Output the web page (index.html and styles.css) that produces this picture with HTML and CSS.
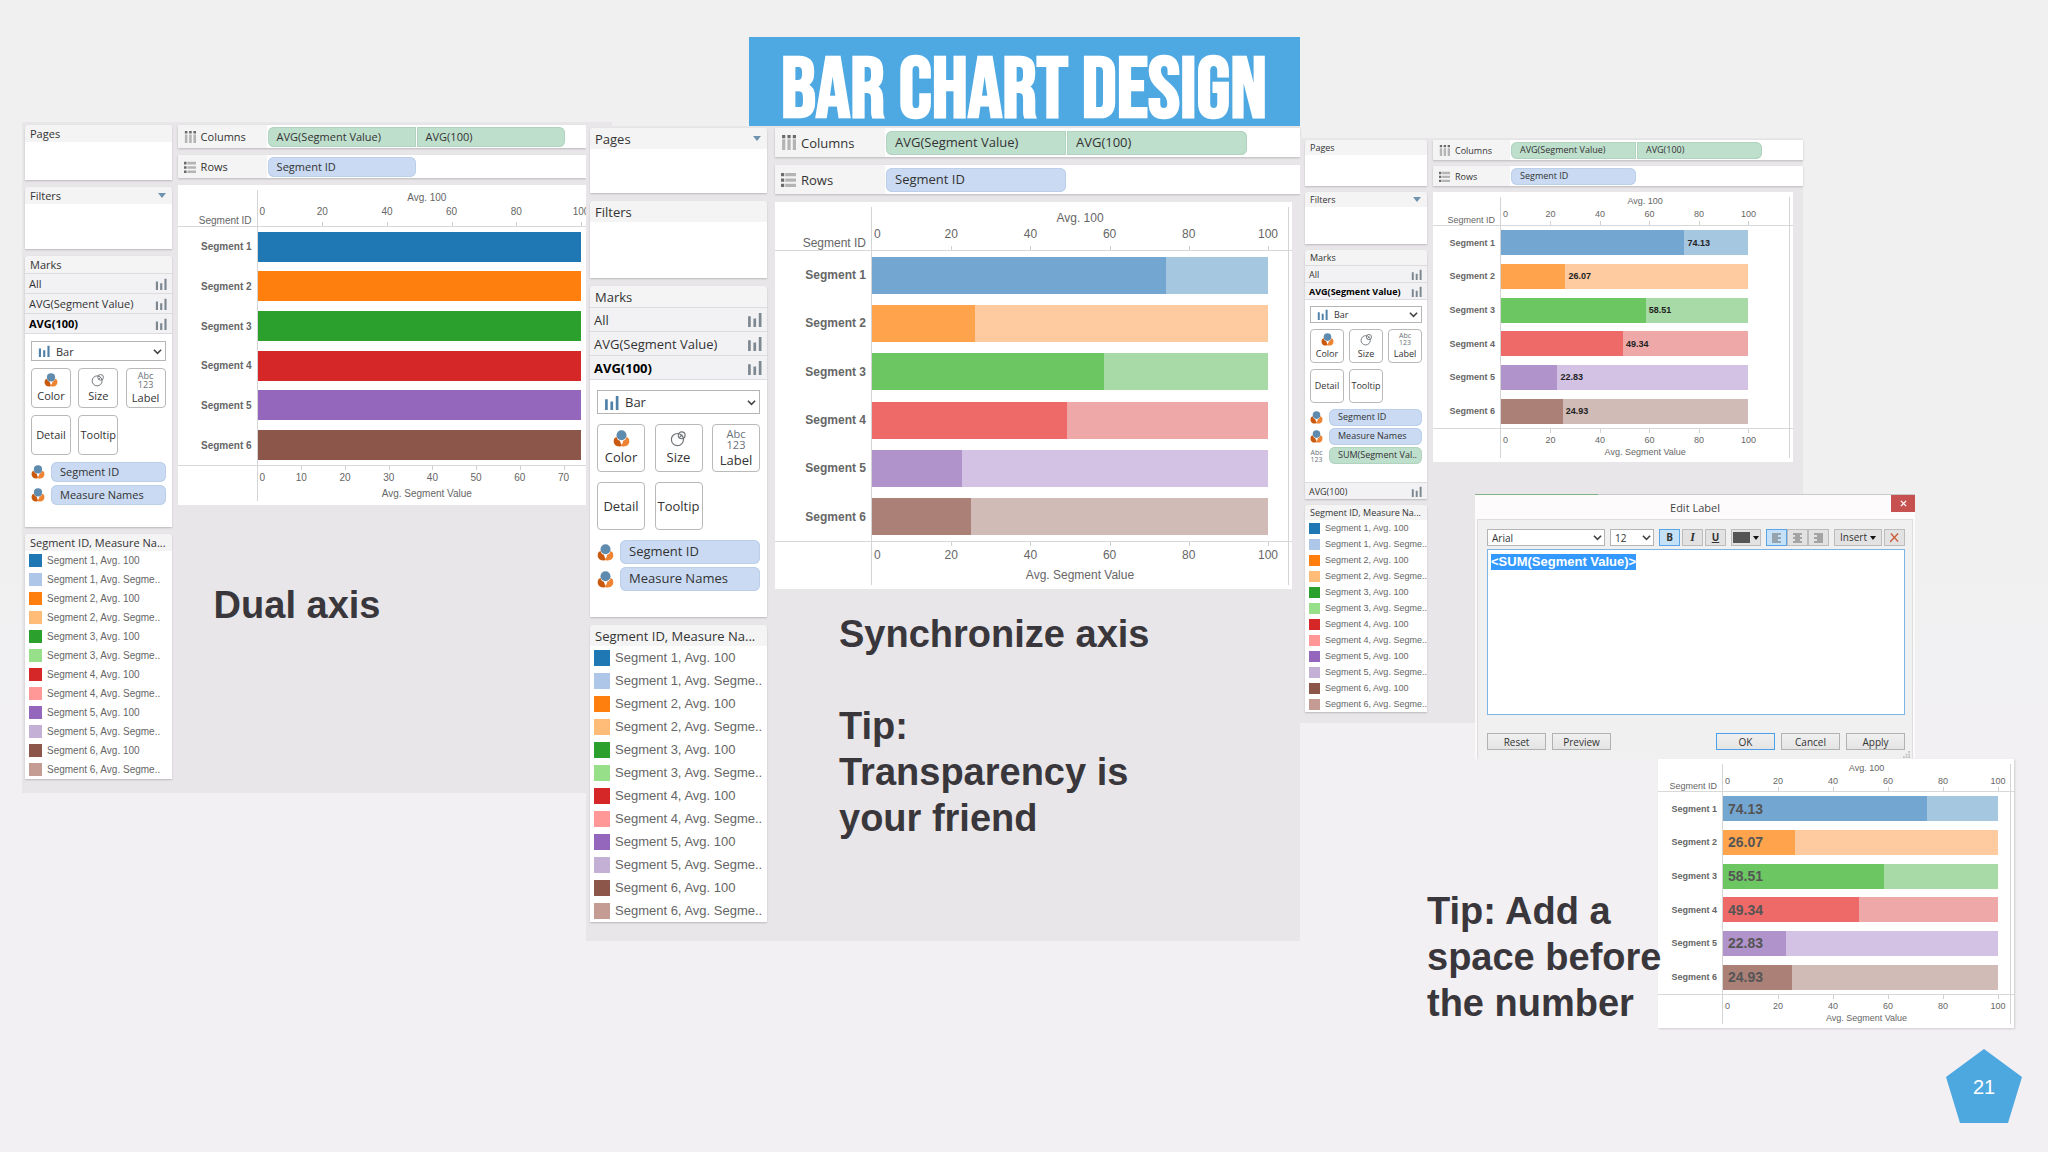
FILE: index.html
```html
<!DOCTYPE html>
<html lang="en">
<head>
    <meta charset="UTF-8">
    <meta name="viewport" content="width=device-width, initial-scale=1.0">
    <title>Bar Chart Design</title>
    <link rel="stylesheet" href="styles.css">
</head>
<body>
    <!-- Shared icons -->
    <svg class="sprite" aria-hidden="true">
        <symbol id="i-bars" viewBox="0 0 14 14">
            <path d="M1 4h2.500v10H1zM6 6h2.500v8H6zM11 1h2.500v13H11z"/>
        </symbol>
        <symbol id="i-color" viewBox="0 0 16 16">
            <path d="M1.500 7.500C-.5 11 1 15.500 6 15.500c1 0 1.800-.5 2-1L6.500 10C4.500 9.500 3.500 8 3.500 6.500z" fill="#c8590e"/>
            <path d="M14.500 7.500c2 3.500.5 8-4.500 8-1.500 0-2.500-.5-3-1.500C8.500 13.500 9.500 12 9.500 10c2-.5 3-2 3-3.500z" fill="#ee8433"/>
            <circle cx="8" cy="5" r="4.700" fill="#5f8bae"/>
        </symbol>
        <symbol id="i-size" viewBox="0 0 16 16">
            <g fill="none" stroke="#6e7378" stroke-width="1.100">
                <circle cx="7" cy="9" r="5.700"/>
                <circle cx="11" cy="5" r="3.200"/>
                <path d="M9 7l2.500-2.500"/>
            </g>
        </symbol>
        <symbol id="i-columns" viewBox="0 0 14 14">
            <path d="M1 0h3v3H1zM6 0h3v3H6zM11 0h3v3h-3z" fill="#6b6b6b"/>
            <path d="M1 4h3v10H1zM6 4h3v10H6zM11 4h3v10h-3z" fill="#b4b4b4"/>
        </symbol>
        <symbol id="i-rows" viewBox="0 0 14 14">
            <path d="M0 1h3v3H0zM0 6h3v3H0zM0 11h3v3H0z" fill="#6b6b6b"/>
            <path d="M4 1h10v3H4zM4 6h10v3H4zM4 11h10v3H4z" fill="#b4b4b4"/>
        </symbol>
        <symbol id="i-chevron" viewBox="0 0 10 10">
            <path d="M1 3l4 4 4-4" fill="none" stroke="#444" stroke-width="1.800"/>
        </symbol>
    </svg>

    <main class="slide">
        <header class="slide-header">
            <h1>BAR CHART DESIGN</h1>
        </header>

        <div class="columns">
            <!-- Step 1: dual axis -->
            <section class="shot shot-dual">
                <aside class="sidebar">
                    <div class="panel pages"><div class="panel-head">Pages</div></div>
                    <div class="panel filters"><div class="panel-head">Filters<i class="caret"></i></div></div>
                    <div class="panel marks">
                        <div class="panel-head">Marks</div>
                        <div class="mark-row">All<svg><use href="#i-bars"/></svg></div>
                        <div class="mark-row">AVG(Segment Value)<svg><use href="#i-bars"/></svg></div>
                        <div class="mark-row active">AVG(100)<svg><use href="#i-bars"/></svg></div>
                        <div class="marks-body">
                            <div class="mark-type">
                                <svg class="type-icon"><use href="#i-bars"/></svg>
                                <select aria-label="Mark type"><option>Bar</option></select>
                                <svg class="chevron"><use href="#i-chevron"/></svg>
                            </div>
                            <div class="mark-buttons">
                                <button type="button"><svg><use href="#i-color"/></svg>Color</button>
                                <button type="button"><svg><use href="#i-size"/></svg>Size</button>
                                <button type="button"><span class="abc">Abc<br>123</span>Label</button>
                                <button type="button">Detail</button>
                                <button type="button">Tooltip</button>
                            </div>
                            <div class="pills">
                                <div class="pill-row"><svg><use href="#i-color"/></svg><span class="pill">Segment ID</span></div>
                                <div class="pill-row"><svg><use href="#i-color"/></svg><span class="pill">Measure Names</span></div>
                            </div>
                        </div>
                    </div>
                    <div class="panel legend"></div>
                </aside>
                <div class="view">
                    <div class="shelf">
                        <div class="shelf-name"><svg><use href="#i-columns"/></svg>Columns</div>
                        <span class="pill green first">AVG(Segment Value)</span>
                        <span class="pill green last">AVG(100)</span>
                    </div>
                    <div class="shelf">
                        <div class="shelf-name"><svg><use href="#i-rows"/></svg>Rows</div>
                        <span class="pill">Segment ID</span>
                    </div>
                    <div class="chart" data-mode="solid"></div>
                    <p class="caption">Dual axis</p>
                </div>
            </section>

            <!-- Step 2: synchronized axis -->
            <section class="shot shot-sync">
                <aside class="sidebar">
                    <div class="panel pages"><div class="panel-head">Pages<i class="caret"></i></div></div>
                    <div class="panel filters"><div class="panel-head">Filters</div></div>
                    <div class="panel marks">
                        <div class="panel-head">Marks</div>
                        <div class="mark-row">All<svg><use href="#i-bars"/></svg></div>
                        <div class="mark-row">AVG(Segment Value)<svg><use href="#i-bars"/></svg></div>
                        <div class="mark-row active">AVG(100)<svg><use href="#i-bars"/></svg></div>
                        <div class="marks-body">
                            <div class="mark-type">
                                <svg class="type-icon"><use href="#i-bars"/></svg>
                                <select aria-label="Mark type"><option>Bar</option></select>
                                <svg class="chevron"><use href="#i-chevron"/></svg>
                            </div>
                            <div class="mark-buttons">
                                <button type="button"><svg><use href="#i-color"/></svg>Color</button>
                                <button type="button"><svg><use href="#i-size"/></svg>Size</button>
                                <button type="button"><span class="abc">Abc<br>123</span>Label</button>
                                <button type="button">Detail</button>
                                <button type="button">Tooltip</button>
                            </div>
                            <div class="pills">
                                <div class="pill-row"><svg><use href="#i-color"/></svg><span class="pill">Segment ID</span></div>
                                <div class="pill-row"><svg><use href="#i-color"/></svg><span class="pill">Measure Names</span></div>
                            </div>
                        </div>
                    </div>
                    <div class="panel legend"></div>
                </aside>
                <div class="view">
                    <div class="shelf">
                        <div class="shelf-name"><svg><use href="#i-columns"/></svg>Columns</div>
                        <span class="pill green first">AVG(Segment Value)</span>
                        <span class="pill green last">AVG(100)</span>
                    </div>
                    <div class="shelf">
                        <div class="shelf-name"><svg><use href="#i-rows"/></svg>Rows</div>
                        <span class="pill">Segment ID</span>
                    </div>
                    <div class="chart" data-mode="split"></div>
                    <p class="caption">Synchronize axis<br><br>Tip:<br>Transparency is<br>your friend</p>
                </div>
            </section>

            <!-- Step 3: labels -->
            <div class="labels-column">
                <section class="shot shot-label">
                    <aside class="sidebar">
                        <div class="panel pages"><div class="panel-head">Pages</div></div>
                        <div class="panel filters"><div class="panel-head">Filters<i class="caret"></i></div></div>
                        <div class="panel marks">
                            <div class="panel-head">Marks</div>
                            <div class="mark-row">All<svg><use href="#i-bars"/></svg></div>
                            <div class="mark-row active">AVG(Segment Value)<svg><use href="#i-bars"/></svg></div>
                            <div class="marks-body">
                                <div class="mark-type">
                                    <svg class="type-icon"><use href="#i-bars"/></svg>
                                    <select aria-label="Mark type"><option>Bar</option></select>
                                    <svg class="chevron"><use href="#i-chevron"/></svg>
                                </div>
                                <div class="mark-buttons">
                                    <button type="button"><svg><use href="#i-color"/></svg>Color</button>
                                    <button type="button"><svg><use href="#i-size"/></svg>Size</button>
                                    <button type="button"><span class="abc">Abc<br>123</span>Label</button>
                                    <button type="button">Detail</button>
                                    <button type="button">Tooltip</button>
                                </div>
                                <div class="pills">
                                    <div class="pill-row"><svg><use href="#i-color"/></svg><span class="pill">Segment ID</span></div>
                                    <div class="pill-row"><svg><use href="#i-color"/></svg><span class="pill">Measure Names</span></div>
                                    <div class="pill-row"><span class="abc">Abc<br>123</span><span class="pill green">SUM(Segment Val..</span></div>
                                </div>
                            </div>
                            <div class="mark-row">AVG(100)<svg><use href="#i-bars"/></svg></div>
                        </div>
                        <div class="panel legend"></div>
                    </aside>
                    <div class="view">
                        <div class="shelf">
                            <div class="shelf-name"><svg><use href="#i-columns"/></svg>Columns</div>
                            <span class="pill green first">AVG(Segment Value)</span>
                            <span class="pill green last">AVG(100)</span>
                        </div>
                        <div class="shelf">
                            <div class="shelf-name"><svg><use href="#i-rows"/></svg>Rows</div>
                            <span class="pill">Segment ID</span>
                        </div>
                        <div class="chart" data-mode="split" data-labels="outside"></div>
                    </div>
                </section>

                <div class="dialog" role="dialog" aria-labelledby="dialog-title">
                    <div class="dialog-title">
                        <span id="dialog-title">Edit Label</span>
                        <button type="button" class="close" aria-label="Close">
                            <svg viewBox="0 0 8 8"><path d="M1 1l6 6M7 1L1 7" stroke="#fff" stroke-width="1.600"/></svg>
                        </button>
                    </div>
                    <div class="dialog-body">
                        <div class="toolbar">
                            <div class="tool-select font-name">
                                <select aria-label="Font"><option>Arial</option></select>
                                <svg class="chevron"><use href="#i-chevron"/></svg>
                            </div>
                            <div class="tool-select font-size">
                                <select aria-label="Font size"><option>12</option></select>
                                <svg class="chevron"><use href="#i-chevron"/></svg>
                            </div>
                            <div class="tool-group spaced">
                                <button type="button" class="tool on"><b>B</b></button>
                                <button type="button" class="tool"><i>I</i></button>
                                <button type="button" class="tool"><u>U</u></button>
                            </div>
                            <button type="button" class="tool color-tool" aria-label="Text color"><span class="swatch"></span><span class="down"></span></button>
                            <div class="tool-group">
                                <button type="button" class="tool on" aria-label="Align left"><svg viewBox="0 0 9 10"><path d="M0 1h9M0 3h6M0 5h9M0 7h6M0 9h9"/></svg></button>
                                <button type="button" class="tool" aria-label="Align center"><svg viewBox="0 0 9 10"><path d="M0 1h9M2 3h5M0 5h9M2 7h5M0 9h9"/></svg></button>
                                <button type="button" class="tool" aria-label="Align right"><svg viewBox="0 0 9 10"><path d="M0 1h9M3 3h6M0 5h9M3 7h6M0 9h9"/></svg></button>
                            </div>
                            <div class="tool-group right spaced">
                                <button type="button" class="tool insert">Insert<span class="down"></span></button>
                                <button type="button" class="tool clear" aria-label="Clear"><svg viewBox="0 0 10 10"><path d="M1 0l8 9M9 0L0 9.500"/></svg></button>
                            </div>
                        </div>
                        <textarea id="label-text" aria-label="Label text" spellcheck="false">&lt;SUM(Segment Value)&gt;</textarea>
                        <div class="dialog-buttons">
                            <button type="button">Reset</button>
                            <button type="button">Preview</button>
                            <button type="button" class="ok">OK</button>
                            <button type="button">Cancel</button>
                            <button type="button">Apply</button>
                        </div>
                        <svg class="grip" viewBox="0 0 8 8"><path d="M6 0h2v2H6zM3 3h2v2H3zM6 3h2v2H6zM0 6h2v2H0zM3 6h2v2H3zM6 6h2v2H6z"/></svg>
                    </div>
                </div>

                <div class="result">
                    <p class="caption">Tip: Add a<br>space before<br>the number</p>
                    <div class="chart" data-mode="split" data-labels="inside"></div>
                </div>
            </div>
        </div>

        <div class="page-number">
            <svg viewBox="0 0 76 74" aria-hidden="true"><path d="M38 0L76 28 62 74H14L0 28z" fill="#4ea8e0"/></svg>
            <span>21</span>
        </div>
    </main>

    <script src="script.js"></script>
</body>
</html>
```

FILE: styles.css
```css
* {
    box-sizing: border-box;
}
body {
    margin: 0;
    font-family: "Segoe UI", "Open Sans", sans-serif;
    color: #333;
}
button, select, textarea {
    font: inherit;
    color: inherit;
    margin: 0;
    padding: 0;
}
.sprite {
    position: absolute;
    width: 0;
    height: 0;
}
.slide {
    position: relative;
    min-height: 100vh;
    padding-top: 37px;
    background: linear-gradient(#f0f0f0, #f0f0f0 40%, #f2f0f3 70%);
    overflow: hidden;
}

/* Title */
.slide-header {
    display: flex;
    justify-content: center;
}
.slide-header h1 {
    position: relative;
    z-index: 1;
    margin: 0;
    padding: 20px 22px 0;
    min-width: 551px;
    height: 89px;
    background: #4ea8e2;
    color: #fff;
    font-family: "Bebas Neue", "Liberation Sans Narrow", "Roboto", sans-serif;
    font-size: 86px;
    line-height: 69px;
    font-weight: bold;
    text-align: center;
    white-space: nowrap;
}

/* Slide columns */
.columns {
    display: grid;
    grid-template-columns: 564fr 714fr 748fr;
    align-items: start;
    margin-top: -4px;
    padding-left: 22px;
}
.shot {
    display: flex;
    background: #e8e6e9;
    font-size: var(--ui);
}
.shot-dual {
    --ui: 11px;
    --plain: 10px;
    --bold: 10px;
    --legend: 10px;
    --side: 144px;
    --gap: 7px;
    --pages: 55px;
    --filters: 62px;
    --head: 17px;
    --row: 20px;
    --pad: 6px;
    --box: 20px;
    --g: 7px;
    --button: 40px;
    --pill-gap: 3px;
    --rest: 22px;
    --icon: 12px;
    --item: 19px;
    --swatch: 13px;
    --shelf: 23px;
    --shelf-name: 89px;
    --pill: 148px;
    --label: 80px;
    --top: 42px;
    --plot: 238px;
    --bottom: 40px;
    --bar: 30px;
    --right: 5px;
    --title-shift: 15px;
    --line: 0;
    gap: 6px;
    margin-right: -26px;
    padding: 3px 26px 14px 3px;
}
.shot-sync {
    --ui: 13px;
    --plain: 12px;
    --bold: 12px;
    --legend: 13px;
    --side: 177px;
    --gap: 8px;
    --pages: 65px;
    --filters: 77px;
    --head: 21px;
    --row: 24px;
    --pad: 7px;
    --box: 24px;
    --g: 10px;
    --button: 48px;
    --pill-gap: 3px;
    --rest: 26px;
    --icon: 15px;
    --item: 23px;
    --swatch: 16px;
    --shelf: 29px;
    --shelf-name: 110px;
    --pill: 180px;
    --label: 97px;
    --top: 49px;
    --plot: 290px;
    --bottom: 48px;
    --bar: 37px;
    --right: 24px;
    --title-shift: 20px;
    --line: 1px;
    position: relative;
    gap: 8px;
    margin-top: 4px;
    padding: 2px 0 19px 4px;
}
.shot-label {
    --ui: 9px;
    --legend: 9px;
    --side: 122px;
    --gap: 6px;
    --pages: 46px;
    --filters: 52px;
    --head: 15px;
    --row: 17px;
    --pad: 5px;
    --box: 17px;
    --g: 6px;
    --button: 34px;
    --pill-gap: 2px;
    --rest: 18px;
    --icon: 11px;
    --item: 16px;
    --swatch: 11px;
    --shelf: 20px;
    --shelf-name: 77px;
    --pill: 125px;
    --label: 68px;
    --top: 34px;
    --right: 45px;
    --title-shift: 41px;
    gap: 6px;
    width: 67.3%;
    margin-top: 16px;
    padding: 2px 0 11px 5px;
}
.shot-label, .result {
    --plain: 9px;
    --bold: 9px;
    --plot: 202px;
    --bottom: 34px;
    --bar: 25px;
    --line: 1px;
}

/* Sidebar panels */
.sidebar {
    display: flex;
    flex: 0 0 var(--side);
    flex-direction: column;
    gap: var(--gap);
    color: #333;
}
.panel {
    background: #fff;
    border-radius: 4px 4px 0 0;
    box-shadow: 0 1px 2px rgba(0, 0, 0, 0.2);
    white-space: nowrap;
}
.pages {
    height: var(--pages);
}
.filters {
    height: var(--filters);
}
.panel-head {
    display: flex;
    align-items: center;
    justify-content: space-between;
    height: var(--head);
    padding: 0 6px 0 5px;
    background: #f4f4f4;
    border-radius: 4px 4px 0 0;
}
.caret {
    border: 4px solid transparent;
    border-top: 5px solid #6f93ae;
    border-bottom: 0;
}
.mark-row {
    display: flex;
    align-items: center;
    justify-content: space-between;
    height: var(--row);
    padding: 0 5px 0 4px;
    border-top: 1px solid #dcdcdf;
    background: #f2f2f5;
}
.mark-row svg {
    width: var(--icon);
    height: var(--icon);
    fill: #7d878f;
}
.mark-row.active {
    color: #000;
    font-weight: bold;
}
.marks-body {
    display: flex;
    flex-direction: column;
    gap: var(--g);
    padding: var(--g) var(--pad) var(--rest);
    border-top: 1px solid #dcdcdf;
}
.mark-type {
    display: flex;
    align-items: center;
    height: var(--box);
    padding: 0 3px 0 6px;
    border: 1px solid #b5b5b5;
    background: #fff;
}
.mark-type .type-icon {
    width: var(--icon);
    height: var(--icon);
    margin-right: 6px;
    fill: #4f81a8;
}
select {
    flex: 1;
    min-width: 0;
    border: 0;
    background: none;
    appearance: none;
}
.chevron {
    width: 9px;
    height: 9px;
}
.mark-buttons {
    display: grid;
    grid-template-columns: repeat(3, var(--button));
    grid-auto-rows: var(--button);
    justify-content: space-between;
    row-gap: var(--g);
}
.mark-buttons button {
    display: flex;
    flex-direction: column;
    align-items: center;
    justify-content: center;
    gap: 2px;
    border: 1px solid #b9b9b9;
    border-radius: 4px;
    background: #fff;
    line-height: 1.3;
}
.mark-buttons svg, .pill-row svg {
    width: calc(var(--icon) + 2px);
    height: calc(var(--icon) + 2px);
}
.abc {
    color: #6a7178;
    font-size: calc(var(--ui) - 2px);
    line-height: calc(var(--ui) - 2px);
    text-align: center;
}
.pills {
    display: flex;
    flex-direction: column;
    gap: var(--pill-gap);
}
.pill-row {
    display: grid;
    grid-template-columns: calc(var(--icon) + 2px) 1fr;
    align-items: center;
    gap: 6px;
}
.pill {
    height: var(--box);
    padding-left: 9px;
    border-radius: 6px;
    background: #c9daf2;
    box-shadow: inset 0 0 0 1px #bccfe9;
    line-height: calc(var(--box) - 1px);
    white-space: nowrap;
    overflow: hidden;
}
.pill.green {
    background: #bfdfcd;
    box-shadow: inset 0 0 0 1px #b0d3c0;
}

/* Color legend */
.legend-item {
    display: flex;
    align-items: center;
    gap: 5px;
    height: var(--item);
    padding-left: 4px;
    color: #666;
    font-family: Arial, "Liberation Sans", sans-serif;
    font-size: var(--legend);
}
.legend-item i {
    width: var(--swatch);
    height: var(--swatch);
}

/* Shelves */
.view {
    flex: 1;
    min-width: 0;
}
.shelf {
    display: flex;
    align-items: center;
    gap: 1px;
    height: var(--shelf);
    margin-bottom: var(--gap);
    background: #fff;
    box-shadow: 0 1px 2px rgba(0, 0, 0, 0.2);
}
.shelf-name {
    display: flex;
    align-items: center;
    gap: 5px;
    flex: 0 0 var(--shelf-name);
    height: 100%;
    padding-left: 6px;
    background: #f4f4f4;
}
.shelf-name svg {
    width: var(--icon);
    height: var(--icon);
}
.shelf .pill {
    flex: 0 0 var(--pill);
}
.shelf .first {
    border-radius: 6px 0 0 6px;
}
.shelf .last {
    border-radius: 0 6px 6px 0;
}

/* Chart */
.chart {
    position: relative;
    background: #fff;
    color: #666;
    font-family: Arial, "Liberation Sans", sans-serif;
    font-size: var(--plain);
    overflow: hidden;
}
.shot-sync .chart {
    margin-right: 8px;
}
.shot-label .chart {
    margin-right: 10px;
}
.chart-top, .chart-row, .chart-bottom {
    display: grid;
    grid-template-columns: var(--label) 1fr var(--right);
}
.chart-top {
    height: var(--top);
    border-bottom: 1px solid #d8d8d8;
}
.chart-bottom {
    height: var(--bottom);
    border-top: 1px solid #d8d8d8;
}
.chart-rows {
    display: grid;
    grid-auto-rows: 1fr;
    height: var(--plot);
}
.chart-row {
    align-items: center;
}
.chart-name {
    padding-right: 6px;
    text-align: right;
    white-space: nowrap;
}
.chart-top .chart-name {
    align-self: end;
}
.chart-row .chart-name {
    font-size: var(--bold);
    font-weight: bold;
}
/* vertical rules on both sides of the plot */
.chart::before, .chart::after {
    content: "";
    position: absolute;
    top: 5px;
    bottom: 4px;
    left: calc(var(--label) - 1px);
    border-left: 1px solid #d4d4d4;
}
.chart::after {
    left: auto;
    right: 3px;
    border-left-width: var(--line);
}
.axis {
    display: flex;
    flex-direction: column;
    justify-content: flex-end;
    text-align: center;
}
.chart-bottom .axis {
    flex-direction: column-reverse;
}
/* the title is centered on the whole pane, which runs past the 100 mark */
.axis-title {
    margin-right: calc(0px - var(--title-shift));
    line-height: calc(var(--plain) + 4px);
}
.ticks {
    position: relative;
    height: calc(var(--top) / 2);
    line-height: calc(var(--plain) + 4px);
}
.tick {
    position: absolute;
    top: 0;
    bottom: 0;
    width: 40px;
    margin-left: -20px;
}
.tick:first-child {
    margin-left: 2px;
    text-align: left;
}
.tick::after {
    content: "";
    position: absolute;
    bottom: 0;
    left: 50%;
    height: 4px;
    border-left: 1px solid #d0d0d0;
}
.tick:first-child::after {
    display: none;
}
.chart-bottom .tick {
    padding-top: 5px;
}
.chart-bottom .tick::after {
    top: 0;
}
.track {
    position: relative;
    display: flex;
    align-items: center;
    height: var(--bar);
}
.fill {
    height: 100%;
}
.value {
    margin-left: 3px;
    color: #222;
    font-size: 9px;
    font-weight: bold;
}
.value.inside {
    position: absolute;
    left: 2px;
    color: #555;
    font-size: 14px;
}

.caption {
    margin: 0;
    color: #39373b;
    font-family: Arial, "Liberation Sans", sans-serif;
    font-size: 38px;
    font-weight: bold;
    line-height: 46px;
    white-space: nowrap;
}
.shot-dual .caption {
    padding: 77px 0 0 36px;
}
.shot-sync .caption {
    padding: 22px 0 0 64px;
}

/* Right column */
.labels-column {
    position: relative;
}
.result {
    --label: 65px;
    --top: 33px;
    --right: 16px;
    --title-shift: 12px;
    display: flex;
    margin-top: 36px;
    padding: 0 34px 0 127px;
}
.result .caption {
    position: relative;
    z-index: 1;
    flex: 0 0 231px;
    min-width: 0;
    padding-top: 129px;
}
.result .chart {
    flex: 1;
    box-shadow: 1px 1px 2px rgba(0, 0, 0, 0.15);
}

/* Edit Label dialog, lies over the third view */
.dialog {
    position: absolute;
    top: 372px;
    left: 175px;
    width: 440px;
    background: #f0f0f0;
    border: solid #fbf9fa;
    border-width: 0 2px;
    font-size: 10px;
}
.dialog-title {
    position: relative;
    display: flex;
    align-items: center;
    justify-content: center;
    height: 25px;
    margin: 0 -2px;
    border-top: 1px solid #c9c9c9;
    background: #fdfbfc;
    color: #444;
    font-size: 11px;
}
/* strip of the window behind */
.dialog-title::before {
    content: "";
    position: absolute;
    top: -1px;
    left: 0;
    width: 28%;
    height: 1px;
    background: #7fb287;
}
.close {
    position: absolute;
    top: 0;
    right: 0;
    width: 24px;
    height: 17px;
    border: 0;
    background: #c75050;
}
.close svg {
    display: block;
    width: 7px;
    height: 7px;
    margin: auto;
}
.dialog-body {
    position: relative;
    padding: 9px 7px 9px 9px;
    border: 1px solid #dedede;
    border-bottom: 0;
}
.toolbar {
    display: flex;
    gap: 5px;
    height: 17px;
}
.tool-select {
    display: flex;
    align-items: center;
    padding: 0 2px 0 4px;
    border: 1px solid #b4b4b4;
    background: #fff;
}
.font-name {
    width: 118px;
}
.font-size {
    width: 44px;
}
.tool-group {
    display: flex;
}
.tool-group.spaced {
    gap: 2px;
}
.tool-group.right {
    margin-left: auto;
}
.tool {
    display: flex;
    align-items: center;
    justify-content: center;
    width: 21px;
    border: 1px solid #bcbcbc;
    background: #e2e2e2;
    line-height: 15px;
}
.tool.on {
    border-color: #5aa5e8;
    background: #c5e1f8;
}
.tool i {
    font-family: "Liberation Serif", serif;
    font-size: 12px;
    font-weight: bold;
}
.tool u {
    font-weight: bold;
}
.tool svg {
    width: 9px;
    height: 10px;
    fill: none;
    stroke: #666;
}
.tool.clear svg {
    stroke: #cc5a33;
    stroke-width: 1.5;
}
.down {
    margin-left: 3px;
    border: 3px solid transparent;
    border-top: 4px solid #111;
    border-bottom: 0;
}
.color-tool {
    width: 30px;
}
.swatch {
    width: 17px;
    height: 11px;
    background: #555;
}
.insert {
    width: 48px;
}
textarea {
    display: block;
    width: 100%;
    height: 166px;
    margin: 3px 0 18px;
    padding: 4px 3px;
    border: 1px solid #7db4e6;
    outline: 0;
    background: #fff;
    font: bold 13px/16px Arial, "Liberation Sans", sans-serif;
    resize: none;
}
textarea::selection {
    background: #3399ff;
    color: #fff;
}
.dialog-buttons {
    display: flex;
    gap: 6px;
}
.dialog-buttons button {
    width: 59px;
    height: 17px;
    border: 1px solid #b2b2b2;
    background: linear-gradient(#f0f0f0, #e4e4e4);
    line-height: 14px;
}
.dialog-buttons .ok {
    margin-left: auto;
    border-color: #4d9fe8;
}
.grip {
    position: absolute;
    right: 2px;
    bottom: 1px;
    width: 7px;
    height: 7px;
    fill: #c0c0c0;
}

/* Slide number */
.page-number {
    position: absolute;
    right: 26px;
    bottom: 29px;
    display: grid;
    place-items: center;
    color: #fff;
    font-family: Arial, "Liberation Sans", sans-serif;
    font-size: 20px;
}
.page-number svg, .page-number span {
    grid-area: 1 / 1;
}
.page-number span {
    padding-top: 3px;
}
.page-number svg {
    width: 76px;
    height: 74px;
}
```

FILE: script.js
```js
const segments = [
    { name: 'Segment 1', value: 74.13, solid: '#1f77b4', pale: '#aec7e8', fill: '#74a6d2', rest: '#a6c7e0' },
    { name: 'Segment 2', value: 26.07, solid: '#ff7f0e', pale: '#ffbb78', fill: '#ffa44d', rest: '#fdcb9f' },
    { name: 'Segment 3', value: 58.51, solid: '#2ca02c', pale: '#98df8a', fill: '#6cc763', rest: '#a8daa7' },
    { name: 'Segment 4', value: 49.34, solid: '#d62728', pale: '#ff9896', fill: '#ee6a69', rest: '#eda8a7' },
    { name: 'Segment 5', value: 22.83, solid: '#9467bd', pale: '#c5b0d5', fill: '#b093ca', rest: '#d3c2e4' },
    { name: 'Segment 6', value: 24.93, solid: '#8c564b', pale: '#c49c94', fill: '#ab8077', rest: '#d1bbb6' }
];

function ticks(step, last, max) {
    let html = '';
    for (let n = 0; n <= last; n += step) {
        html += `<span class="tick" style="left:${n / max * 100}%">${n}</span>`;
    }
    return `<div class="ticks">${html}</div>`;
}

function row(segment, mode, labels) {
    let track;
    if (mode === 'solid') {
        track = `<div class="track" style="background:${segment.solid}"></div>`;
    } else {
        const value = labels ? `<span class="value ${labels}">${segment.value}</span>` : '';
        track = `<div class="track" style="background:${segment.rest}">
            <div class="fill" style="width:${segment.value}%;background:${segment.fill}"></div>${value}
        </div>`;
    }
    return `<div class="chart-row"><div class="chart-name">${segment.name}</div>${track}</div>`;
}

document.querySelectorAll('.chart').forEach(chart => {
    const { mode, labels } = chart.dataset;
    // The unsynchronized axis stops at the largest segment value
    const bottom = mode === 'solid' ? ticks(10, 70, 74) : ticks(20, 100, 100);
    chart.innerHTML = `
        <div class="chart-top">
            <div class="chart-name">Segment ID</div>
            <div class="axis"><div class="axis-title">Avg. 100</div>${ticks(20, 100, 100)}</div>
        </div>
        <div class="chart-rows">${segments.map(s => row(s, mode, labels)).join('')}</div>
        <div class="chart-bottom">
            <div></div>
            <div class="axis"><div class="axis-title">Avg. Segment Value</div>${bottom}</div>
        </div>`;
});

document.querySelectorAll('.legend').forEach(legend => {
    legend.innerHTML = '<div class="panel-head">Segment ID, Measure Na...</div>' + segments.map(s => `
        <div class="legend-item"><i style="background:${s.solid}"></i>${s.name}, Avg. 100</div>
        <div class="legend-item"><i style="background:${s.pale}"></i>${s.name}, Avg. Segme..</div>`).join('');
});

const labelText = document.getElementById('label-text');
labelText.focus({ preventScroll: true });
labelText.select();
```
